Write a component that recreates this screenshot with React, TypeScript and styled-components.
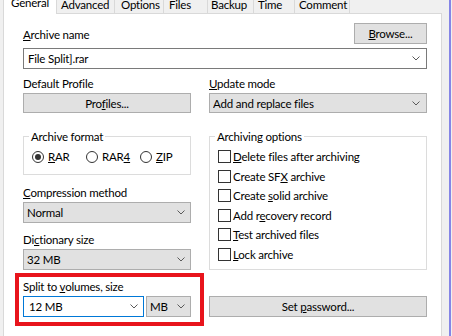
import styled, { createGlobalStyle } from "styled-components";

const GlobalStyle = createGlobalStyle`
  html, body {
    margin: 0;
    padding: 0;
    background: #f0f0f0;
  }
  body {
    font-family: Lato, "Noto Sans", sans-serif;
    font-size: 11.5px;
    letter-spacing: -0.2px;
    color: #000;
  }
`;

const Window = styled.div`
  width: 452px;
  height: 336px;
  display: flex;
  overflow: hidden;
  background: #f0f0f0;
`;

const TabControl = styled.div`
  margin-left: 3px;
  width: 439px;
  flex: none;
  display: flex;
  flex-direction: column;
`;

const Gutter = styled.div`
  width: 7px;
  flex: none;
  border-right: 2px solid #8585e6;
`;

const TabStrip = styled.div`
  display: flex;
  align-items: flex-end;
  height: 14px;
  overflow: hidden;
  flex: none;
`;

const Tab = styled.div<{ $w: number; $pl: number; $active?: boolean }>`
  box-sizing: border-box;
  flex: none;
  width: ${(p) => p.$w}px;
  height: ${(p) => (p.$active ? 26 : 24)}px;
  padding-left: ${(p) => p.$pl}px;
  padding-bottom: ${(p) => (p.$active ? 4 : 1)}px;
  display: flex;
  align-items: flex-end;
  line-height: 15px;
  white-space: nowrap;
  background: ${(p) => (p.$active ? "#fff" : "#f0f0f0")};
  border-top: 1px solid #d9d9d9;
  border-right: 1px solid #d9d9d9;
  border-left: ${(p) => (p.$active ? "1px solid #d9d9d9" : "none")};
  border-bottom: ${(p) => (p.$active ? "none" : "1px solid #d9d9d9")};
`;

const TabFiller = styled.div`
  flex: 1;
  height: 14px;
  box-sizing: border-box;
  border-bottom: 1px solid #d9d9d9;
`;

const Panel = styled.div`
  flex: 1;
  background: #fff;
  border-left: 1px solid #d9d9d9;
  border-right: 1px solid #d9d9d9;
  padding: 9px 14px 0 19px;
`;

const HeaderRow = styled.div`
  display: flex;
  justify-content: space-between;
  align-items: flex-end;
`;

const Columns = styled.div`
  display: grid;
  grid-template-columns: 168px 218px;
  column-gap: 18px;
`;

const Column = styled.div`
  display: flex;
  flex-direction: column;
`;

const Label = styled.div<{ $mt?: number }>`
  line-height: 15px;
  white-space: nowrap;
  margin-top: ${(p) => p.$mt ?? 0}px;
  margin-bottom: 2px;
`;

const U = styled.span`
  text-decoration: underline;
  text-underline-offset: 1px;
`;

const Button = styled.div<{ $w?: number; $h?: number; $mt?: number }>`
  box-sizing: border-box;
  width: ${(p) => (p.$w ? `${p.$w}px` : "100%")};
  height: ${(p) => p.$h ?? 21}px;
  margin-top: ${(p) => p.$mt ?? 0}px;
  background: #e1e1e1;
  border: 1px solid #adadad;
  display: flex;
  align-items: center;
  justify-content: center;
  line-height: 15px;
  white-space: nowrap;
`;

type ComboKind = "edit" | "list" | "focus";

const ComboBox = styled.div<{ $kind: ComboKind; $h?: number; $mt?: number; $pl: number; $pr: number }>`
  box-sizing: border-box;
  height: ${(p) => p.$h ?? 21}px;
  margin-top: ${(p) => p.$mt ?? 0}px;
  display: flex;
  align-items: center;
  padding-left: ${(p) => p.$pl}px;
  padding-right: ${(p) => p.$pr}px;
  line-height: 15px;
  white-space: nowrap;
  background: ${(p) => (p.$kind === "list" ? "#e1e1e1" : "#fff")};
  border: 1px solid
    ${(p) => (p.$kind === "list" ? "#adadad" : p.$kind === "focus" ? "#0078d7" : "#7a7a7a")};
`;

const ComboText = styled.span`
  flex: 1;
  overflow: hidden;
`;

const Chevron = () => (
  <svg width="8" height="5" viewBox="0 0 8 5">
    <polyline points="0.5,0.5 4,4 7.5,0.5" fill="none" stroke="#5a5a5a" strokeWidth="1" />
  </svg>
);

const Combo = ({
  kind,
  text,
  h,
  mt,
  pl = 3,
  pr = 6,
}: {
  kind: ComboKind;
  text: string;
  h?: number;
  mt?: number;
  pl?: number;
  pr?: number;
}) => (
  <ComboBox $kind={kind} $h={h} $mt={mt} $pl={pl} $pr={pr}>
    <ComboText>{text}</ComboText>
    <Chevron />
  </ComboBox>
);

const Group = styled.fieldset<{ $mt: number; $pb: number }>`
  margin: ${(p) => p.$mt}px 0 0 0;
  min-width: 0;
  border: 1px solid #dcdcdc;
  padding: 5px 0 ${(p) => p.$pb}px 5px;
`;

const Legend = styled.legend`
  padding: 0 2px;
  line-height: 15px;
  white-space: nowrap;
`;

const RadioRow = styled.div`
  display: grid;
  grid-template-columns: 54px 54px auto;
  margin-left: 3px;
`;

const RadioItem = styled.div`
  display: flex;
  align-items: center;
  gap: 4px;
  line-height: 15px;
`;

const RadioDot = styled.span<{ $checked?: boolean }>`
  box-sizing: border-box;
  width: 12px;
  height: 12px;
  border-radius: 50%;
  border: 1px solid #333;
  background: #fff;
  display: flex;
  align-items: center;
  justify-content: center;
  &::after {
    content: "";
    width: 6px;
    height: 6px;
    border-radius: 50%;
    background: ${(p) => (p.$checked ? "#333" : "transparent")};
  }
`;

const CheckList = styled.div`
  display: grid;
  grid-auto-rows: 15px;
  row-gap: 4.5px;
  margin-left: 3px;
`;

const CheckItem = styled.div`
  display: flex;
  align-items: center;
  gap: 2px;
  line-height: 15px;
  white-space: nowrap;
`;

const CheckBox = styled.span`
  box-sizing: border-box;
  width: 13px;
  height: 13px;
  border: 1px solid #333;
  background: #fff;
`;

const Highlight = styled.div`
  margin: 3px -13px 0 -8px;
  border: 4px solid #e8141c;
  padding: 2px 9px 5px 4px;
`;

const SplitRow = styled.div`
  display: grid;
  grid-template-columns: 121px 45px;
  column-gap: 2px;
`;

const tabs = [
  { name: "General", w: 54, pl: 7 },
  { name: "Advanced", w: 58, pl: 4 },
  { name: "Options", w: 49, pl: 6 },
  { name: "Files", w: 44, pl: 5 },
  { name: "Backup", w: 46, pl: 3 },
  { name: "Time", w: 41, pl: 4 },
  { name: "Comment", w: 55, pl: 4 },
];

const options: [string, string, string][] = [
  ["", "D", "elete files after archiving"],
  ["Create SF", "X", " archive"],
  ["Create ", "s", "olid archive"],
  ["Add r", "e", "covery record"],
  ["", "T", "est archived files"],
  ["", "L", "ock archive"],
];

export default function App() {
  return (
    <>
      <GlobalStyle />
      <Window>
        <TabControl>
          <TabStrip>
            {tabs.map((t, i) => (
              <Tab key={t.name} $w={t.w} $pl={t.pl} $active={i === 0}>
                {t.name}
              </Tab>
            ))}
            <TabFiller />
          </TabStrip>
          <Panel>
            <HeaderRow>
              <Label>
                <U>A</U>rchive name
              </Label>
              <Button $w={73}>
                <span>
                  <U>B</U>rowse...
                </span>
              </Button>
            </HeaderRow>
            <Combo kind="edit" text="File Split].rar" mt={4} pl={4} pr={6} />
            <Columns>
              <Column>
                <Label $mt={7}>Default Profile</Label>
                <Button $h={20}>
                  <span>
                    Pro<U>f</U>iles...
                  </span>
                </Button>
                <Group $mt={16} $pb={10}>
                  <Legend>Archive format</Legend>
                  <RadioRow>
                    <RadioItem>
                      <RadioDot $checked />
                      <span>
                        <U>R</U>AR
                      </span>
                    </RadioItem>
                    <RadioItem>
                      <RadioDot />
                      <span>
                        RAR<U>4</U>
                      </span>
                    </RadioItem>
                    <RadioItem>
                      <RadioDot />
                      <span>
                        <U>Z</U>IP
                      </span>
                    </RadioItem>
                  </RadioRow>
                </Group>
                <Label $mt={10}>
                  <U>C</U>ompression method
                </Label>
                <Combo kind="list" text="Normal" pr={5} />
                <Label $mt={9}>
                  Di<U>c</U>tionary size
                </Label>
                <Combo kind="list" text="32 MB" pr={5} />
                <Highlight>
                  <Label>
                    Split to <U>v</U>olumes, size
                  </Label>
                  <SplitRow>
                    <Combo kind="focus" text="12 MB" pl={5} pr={5} />
                    <Combo kind="list" text="MB" pr={5} />
                  </SplitRow>
                </Highlight>
              </Column>
              <Column>
                <Label $mt={7}>
                  <U>U</U>pdate mode
                </Label>
                <Combo kind="list" text="Add and replace files" h={20} pr={6} />
                <Group $mt={16} $pb={7.5}>
                  <Legend>Archiving options</Legend>
                  <CheckList>
                    {options.map(([a, k, b]) => (
                      <CheckItem key={a + k + b}>
                        <CheckBox />
                        <span>
                          {a}
                          <U>{k}</U>
                          {b}
                        </span>
                      </CheckItem>
                    ))}
                  </CheckList>
                </Group>
                <Button $mt={26}>
                  <span>
                    Set <U>p</U>assword...
                  </span>
                </Button>
              </Column>
            </Columns>
          </Panel>
        </TabControl>
        <Gutter />
      </Window>
    </>
  );
}
